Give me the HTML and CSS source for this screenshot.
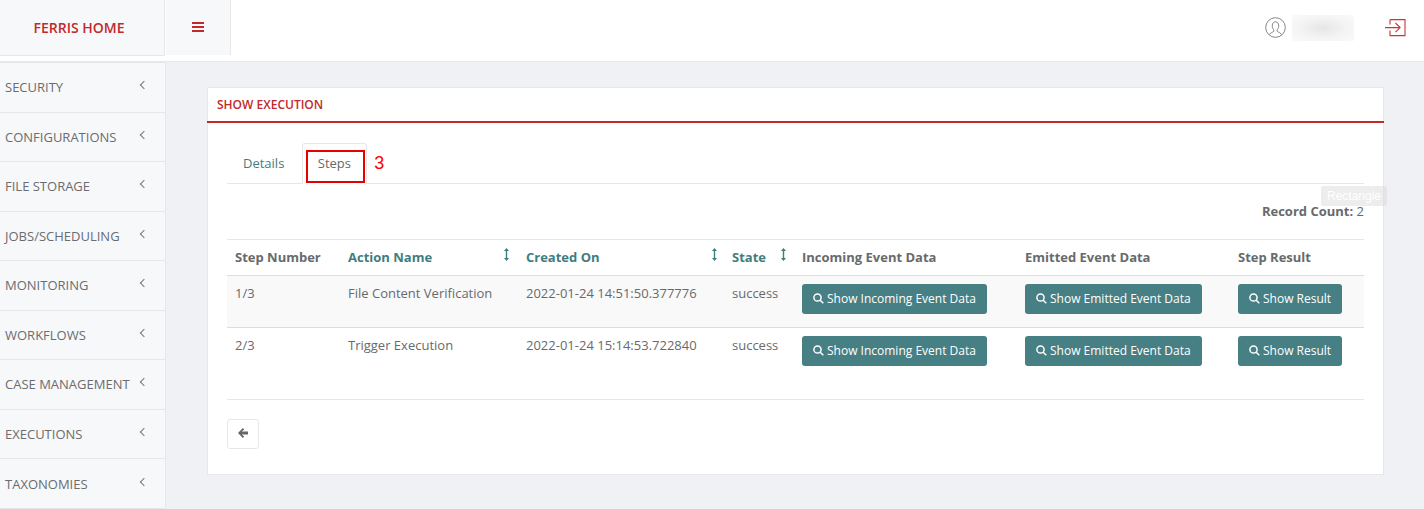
FILE: index.html
```html
<!DOCTYPE html>
<html lang="en">
<head>
    <meta charset="UTF-8">
    <title>Show Execution</title>
    <link rel="stylesheet" href="styles.css">
</head>
<body>
    <header class="topbar">
        <div class="brand">FERRIS HOME</div>
        <button class="menu-toggle" aria-label="Toggle menu">
            <svg width="12" height="10" viewBox="0 0 12 10"><path d="M0 0h12v2H0zM0 4h12v2H0zM0 8h12v2H0z" fill="#c12a2a"/></svg>
        </button>
        <div class="topbar-right">
            <svg class="user-icon" width="21" height="21" viewBox="0 0 21 21" fill="none" stroke="#777" stroke-width="0.9">
                <circle cx="10.5" cy="10.5" r="9.8"/>
                <path d="M4.5 17.6c.4-1.8 3.6-2.3 4.3-3.4.3-.6.2-1.2-.3-1.8-1-1-1.3-2.8-1.2-4.3.2-2 1.500-3.300 3.200-3.300s3 1.300 3.200 3.300c.1 1.500-.2 3.300-1.200 4.300-.5.600-.6 1.200-.3 1.800.7 1.100 3.900 1.600 4.300 3.400"/>
            </svg>
            <div class="user-name"></div>
            <svg class="logout-icon" width="21" height="18" viewBox="0 0 21 18" fill="none" stroke="#c9363a" stroke-width="1.100">
                <path d="M5 .6h15v16H5v-5M5 5.500V.6"/>
                <path d="M0 8.600h15M10.500 4l4.600 4.600-4.600 4.600"/>
            </svg>
        </div>
    </header>

    <div class="layout">
        <nav class="sidebar">
            <a class="nav-item">SECURITY <span class="chevron"></span></a>
            <a class="nav-item">CONFIGURATIONS <span class="chevron"></span></a>
            <a class="nav-item">FILE STORAGE <span class="chevron"></span></a>
            <a class="nav-item">JOBS/SCHEDULING <span class="chevron"></span></a>
            <a class="nav-item">MONITORING <span class="chevron"></span></a>
            <a class="nav-item">WORKFLOWS <span class="chevron"></span></a>
            <a class="nav-item">CASE MANAGEMENT <span class="chevron"></span></a>
            <a class="nav-item">EXECUTIONS <span class="chevron"></span></a>
            <a class="nav-item">TAXONOMIES <span class="chevron"></span></a>
        </nav>

        <main class="content">
            <section class="card">
                <h1 class="card-title">SHOW EXECUTION</h1>
                <div class="card-body">
                    <div class="tabs">
                        <a class="tab">Details</a>
                        <a class="tab tab-active">Steps<span class="tab-marker"></span></a>
                        <span class="step-number">3</span>
                    </div>
                    <div class="ghost-label">Rectangle</div>
                    <p class="record-count"><b>Record Count:</b> 2</p>

                    <table class="steps-table">
                        <colgroup>
                            <col class="col-step"><col class="col-action"><col class="col-created">
                            <col class="col-state"><col class="col-incoming"><col class="col-emitted"><col>
                        </colgroup>
                        <thead>
                            <tr>
                                <th>Step Number</th>
                                <th class="sortable">Action Name
                                    <svg class="sort-icon sort-action" width="5" height="13" viewBox="0 0 5 13"><path d="M2.500 0L5 3H3.200v7H5l-2.500 3L0 10h1.800V3H0z" fill="#3f7d80"/></svg>
                                </th>
                                <th class="sortable">Created On
                                    <svg class="sort-icon sort-created" width="5" height="13" viewBox="0 0 5 13"><path d="M2.500 0L5 3H3.200v7H5l-2.500 3L0 10h1.800V3H0z" fill="#3f7d80"/></svg>
                                </th>
                                <th class="sortable">State
                                    <svg class="sort-icon sort-state" width="5" height="13" viewBox="0 0 5 13"><path d="M2.500 0L5 3H3.200v7H5l-2.500 3L0 10h1.800V3H0z" fill="#3f7d80"/></svg>
                                </th>
                                <th>Incoming Event Data</th>
                                <th>Emitted Event Data</th>
                                <th>Step Result</th>
                            </tr>
                        </thead>
                        <tbody>
                            <tr class="row-odd">
                                <td>1/3</td>
                                <td>File Content Verification</td>
                                <td>2022-01-24 14:51:50.377776</td>
                                <td>success</td>
                                <td><button class="btn-show"><svg class="search-icon" width="11" height="11" viewBox="0 0 11 11" fill="none" stroke="#fff" stroke-width="1.500"><circle cx="4.500" cy="4.500" r="3.600"/><path d="M7.200 7.200L10.300 10.300"/></svg>Show Incoming Event Data</button></td>
                                <td><button class="btn-show"><svg class="search-icon" width="11" height="11" viewBox="0 0 11 11" fill="none" stroke="#fff" stroke-width="1.500"><circle cx="4.500" cy="4.500" r="3.600"/><path d="M7.200 7.200L10.300 10.300"/></svg>Show Emitted Event Data</button></td>
                                <td><button class="btn-show"><svg class="search-icon" width="11" height="11" viewBox="0 0 11 11" fill="none" stroke="#fff" stroke-width="1.500"><circle cx="4.500" cy="4.500" r="3.600"/><path d="M7.200 7.200L10.300 10.300"/></svg>Show Result</button></td>
                            </tr>
                            <tr>
                                <td>2/3</td>
                                <td>Trigger Execution</td>
                                <td>2022-01-24 15:14:53.722840</td>
                                <td>success</td>
                                <td><button class="btn-show"><svg class="search-icon" width="11" height="11" viewBox="0 0 11 11" fill="none" stroke="#fff" stroke-width="1.500"><circle cx="4.500" cy="4.500" r="3.600"/><path d="M7.200 7.200L10.300 10.300"/></svg>Show Incoming Event Data</button></td>
                                <td><button class="btn-show"><svg class="search-icon" width="11" height="11" viewBox="0 0 11 11" fill="none" stroke="#fff" stroke-width="1.500"><circle cx="4.500" cy="4.500" r="3.600"/><path d="M7.200 7.200L10.300 10.300"/></svg>Show Emitted Event Data</button></td>
                                <td><button class="btn-show"><svg class="search-icon" width="11" height="11" viewBox="0 0 11 11" fill="none" stroke="#fff" stroke-width="1.500"><circle cx="4.500" cy="4.500" r="3.600"/><path d="M7.200 7.200L10.300 10.300"/></svg>Show Result</button></td>
                            </tr>
                        </tbody>
                    </table>

                    <div class="card-footer">
                        <button class="btn-back" aria-label="Back">
                            <svg width="10" height="10" viewBox="0 0 10 10"><path d="M4.800 0l1.500 1.500L3.600 3.600H10v2.800H3.600l2.700 2.100L4.800 10 0 5z" fill="#666"/></svg>
                        </button>
                    </div>
                </div>
            </section>
        </main>
    </div>
</body>
</html>
```

FILE: styles.css
```css
html, body {
    margin: 0;
    height: 509px;
    overflow: hidden;
}
body {
    font-family: "Open Sans", Arial, sans-serif;
    font-size: 13px;
    color: #676a6c;
    background-color: #f0f1f5;
}

/* top bar */
.topbar {
    display: flex;
    height: 62px;
    background-color: #fff;
    border-bottom: 1px solid #e7e7e7;
    box-sizing: border-box;
    align-items: flex-start;
}
.brand {
    width: 165px;
    height: 56px;
    line-height: 55px;
    box-sizing: border-box;
    padding-right: 6px;
    text-align: center;
    font-size: 14px;
    font-weight: 600;
    color: #c12a2a;
    background-color: #f7f8fa;
    border-bottom: 1px solid #e7e7e7;
    border-right: 1px solid #e7e7e7;
}
.menu-toggle {
    width: 65px;
    height: 55px;
    padding: 0;
    background-color: #f7f8fa;
    border: none;
    border-right: 1px solid #e7e7e7;
    margin-left: 1px;
}
.topbar-right {
    margin-left: auto;
    display: flex;
    align-items: center;
    height: 55px;
    padding-right: 18px;
}
.user-icon {
    margin-right: 6px;
}
.user-name {
    width: 62px;
    height: 26px;
    margin-right: 31px;
    background: radial-gradient(ellipse at center, #e6e6e6 0%, #f4f4f4 55%, #fafafa 100%);
}

/* layout */
.layout {
    display: flex;
}
.sidebar {
    width: 166px;
    box-sizing: border-box;
    flex-shrink: 0;
    background-color: #f7f8fa;
    border-right: 1px solid #e7e7e7;
    border-top: 1px solid #e7e7e7;
}
.nav-item {
    display: flex;
    justify-content: space-between;
    align-items: center;
    height: 49.54px;
    box-sizing: border-box;
    padding: 0 19px 0 5px;
    font-size: 13px;
    white-space: nowrap;
    color: #6a6c6f;
    border-bottom: 1px solid #e7e7e7;
}
.chevron {
    width: 5px;
    height: 5px;
    margin-top: -4px;
    margin-right: -1px;
    border-left: 1px solid #777;
    border-bottom: 1px solid #777;
    transform: rotate(45deg);
}

.content {
    flex: 1;
    padding: 25px 40px 0 41px;
}
.card {
    background-color: #fff;
    border: 1px solid #e7e7eb;
    height: 388px;
    box-sizing: border-box;
}
.card-title {
    margin: 0 -1px;
    height: 35px;
    line-height: 33px;
    padding-left: 10px;
    box-sizing: border-box;
    font-size: 12px;
    font-weight: 600;
    color: #c12a2a;
    border-bottom: 2px solid #c12a2a;
}
.card-body {
    position: relative;
    padding: 20px 19px 0;
}

/* tabs */
.tabs {
    display: flex;
    align-items: flex-end;
    height: 40px;
    border-bottom: 1px solid #e7e7e7;
}
.tab {
    position: relative;
    height: 40px;
    line-height: 40px;
    box-sizing: border-box;
    padding: 0 16px;
    color: #3f7d80;
    margin-right: 2px;
}
.tab-active {
    color: #676a6c;
    height: 41px;
    line-height: 38px;
    margin-bottom: -1px;
    background-color: #fff;
    border: 1px solid #e7e7e7;
    border-bottom: none;
    border-radius: 3px 3px 0 0;
    width: 65px;
    text-align: center;
    padding: 0 1px 0 0;
}
.tab-marker {
    position: absolute;
    left: 3px;
    top: 6px;
    width: 59px;
    height: 33px;
    box-sizing: border-box;
    border: 2px solid #e60000;
}
.step-number {
    align-self: center;
    margin-left: 5px;
    font-family: "Liberation Sans", Arial, sans-serif;
    font-size: 18px;
    color: #f00;
}
.ghost-label {
    position: absolute;
    right: -4px;
    top: 63px;
    width: 66px;
    height: 20px;
    line-height: 20px;
    text-align: center;
    font-family: "Liberation Sans", Arial, sans-serif;
    font-size: 12px;
    color: #fff;
    background-color: rgba(215, 215, 215, 0.45);
    border-radius: 2px;
}
.record-count {
    margin: 0;
    height: 55px;
    padding-top: 18px;
    box-sizing: border-box;
    text-align: right;
    line-height: 18px;
}
.record-count b {
    font-weight: 700;
}

/* table */
.steps-table {
    width: 100%;
    table-layout: fixed;
    border-collapse: collapse;
    border-top: 1px solid #e7e7e7;
}
.col-step { width: 113px; }
.col-action { width: 178px; }
.col-created { width: 206px; }
.col-state { width: 70px; }
.col-incoming { width: 223px; }
.col-emitted { width: 213px; }
.steps-table th {
    position: relative;
    height: 36px;
    box-sizing: border-box;
    padding: 0 8px 2px;
    text-align: left;
    font-weight: 700;
    white-space: nowrap;
    border-bottom: 1px solid #ddd;
}
.steps-table th.sortable {
    color: #3f7d80;
}
.sort-icon {
    position: absolute;
    top: 8px;
}
.sort-action { right: 9px; }
.sort-created { right: 7px; }
.sort-state { right: 8px; }
.steps-table td {
    height: 52px;
    box-sizing: border-box;
    padding: 8px 8px 0;
    vertical-align: top;
    white-space: nowrap;
    line-height: 18px;
    border-bottom: 1px solid #ddd;
}
.steps-table tbody tr:last-child td {
    border-bottom: none;
}
.row-odd {
    background-color: #f9f9f9;
}
.btn-show {
    display: inline-flex;
    align-items: center;
    height: 30px;
    padding: 0 11px 1px;
    font-family: inherit;
    font-size: 12px;
    color: #fff;
    background-color: #467f84;
    border: none;
    border-radius: 3px;
    white-space: nowrap;
}
.search-icon {
    margin-right: 3px;
}

/* footer */
.card-footer {
    margin-top: 19px;
    padding-top: 19px;
    border-top: 1px solid #e7e7e7;
}
.btn-back {
    display: block;
    width: 32px;
    height: 30px;
    padding: 0;
    background-color: #fff;
    border: 1px solid #e7e7e7;
    border-radius: 3px;
}
```
